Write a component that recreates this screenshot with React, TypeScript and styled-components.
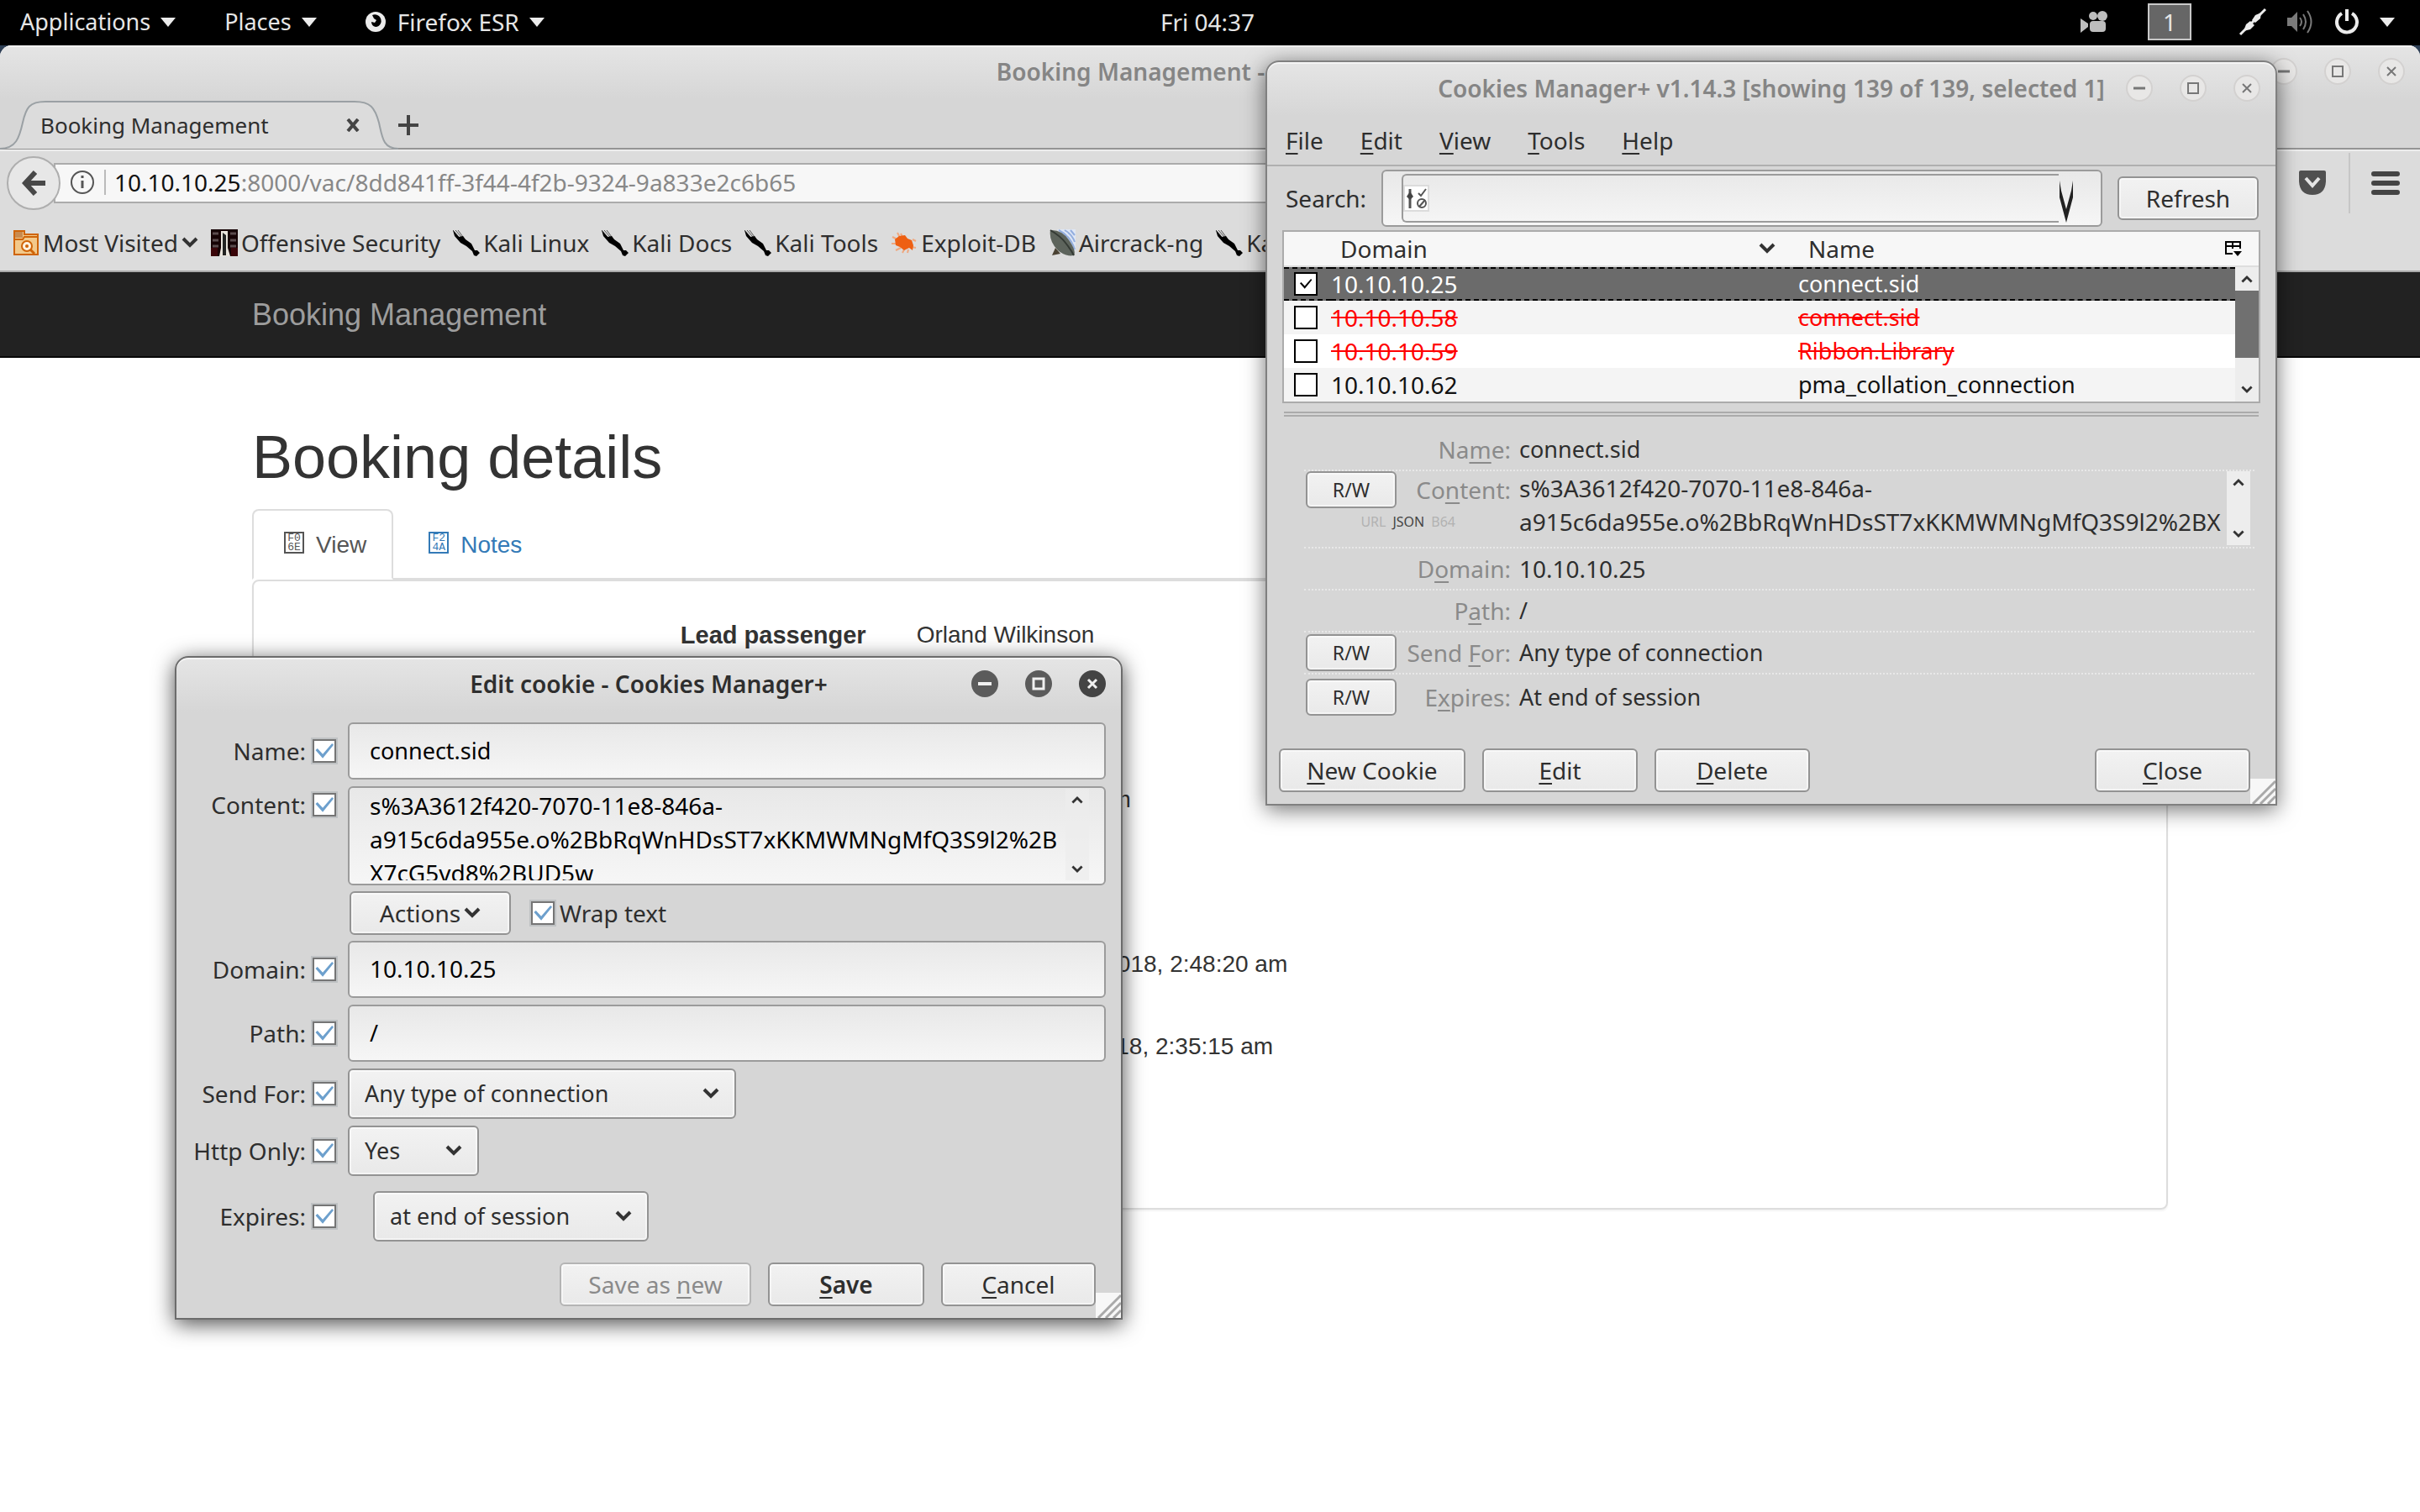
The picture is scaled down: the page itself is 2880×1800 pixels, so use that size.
import React from 'react';
import styled, { createGlobalStyle, css } from 'styled-components';

const UI_FONT = '"Noto Sans", "Open Sans", sans-serif';
const WEB_FONT = '"Liberation Sans", Arial, sans-serif';
const LINE = '#ababab';
const EDGE = '#939393';
const INK = '#2e2e2e';

const GlobalStyle = createGlobalStyle`
  *, *::before, *::after { box-sizing: border-box; }
  body {
    margin: 0;
    background: #2e3f55;
    color: ${INK};
    font: 28px/40px ${UI_FONT};
  }
  button, input, select, textarea {
    margin: 0;
    padding: 0;
    font: inherit;
    color: inherit;
    border: 0;
    border-radius: 0;
    background: none;
    outline: none;
  }
  svg { display: block; flex: none; }
`;

const Desktop = styled.div`
  position: relative;
  display: flex;
  flex-direction: column;
  min-height: 100vh;
  overflow: hidden;
`;

/* ---------- system bar ---------- */

const SystemBar = styled.header`
  display: grid;
  grid-template-columns: 1fr auto 1fr;
  align-items: center;
  height: 54px;
  padding: 0 30px 2px 24px;
  background: #000;
  color: #e6e6e6;
`;

const BarGroup = styled.div<{ $end?: boolean }>`
  display: flex;
  align-items: center;
  gap: ${(p) => (p.$end ? 24 : 58)}px;
  justify-content: ${(p) => (p.$end ? 'flex-end' : 'flex-start')};
`;

const BarMenu = styled.button`
  display: flex;
  align-items: center;
  gap: 12px;
  font-size: 27px;
  white-space: nowrap;
`;

const AppName = styled.span`
  margin-left: 2px;
  font-size: 28px;
`;

const Workspace = styled.button`
  width: 52px;
  height: 44px;
  margin: 0 32px 0 24px;
  border: 2px solid #c8c8c8;
  background: #666;
  line-height: 38px;
`;

const Triangle = () => (
  <svg width="18" height="11" viewBox="0 0 18 11">
    <path d="M0 0H18L9 11Z" fill="#ececec" />
  </svg>
);

/* ---------- shared window parts ---------- */

const TitleBar = styled.div`
  display: grid;
  grid-template-columns: 1fr auto 1fr;
  align-items: center;
  height: 62px;
  padding: 0 18px;
`;

const BrowserTitleBar = styled(TitleBar)`
  padding-left: 34px;
`;

const Title = styled.h2<{ $active?: boolean }>`
  grid-column: 2;
  margin: 0;
  font-size: 28px;
  font-weight: 600;
  white-space: nowrap;
  color: ${(p) => (p.$active ? INK : '#858585')};
`;

const TitleButtons = styled.div`
  display: flex;
  gap: 32px;
  justify-content: flex-end;
`;

const RoundButton = styled.button<{ $active?: boolean; $dark?: boolean }>`
  display: grid;
  place-items: center;
  width: 32px;
  height: 32px;
  border-radius: 50%;
  color: ${(p) => (p.$active ? '#f0f0f0' : '#777')};
  background: ${(p) => (p.$active ? (p.$dark ? '#444' : '#5b5b5b') : '#e8e7e6')};
  border: ${(p) => (p.$active ? '0' : '2px solid #d3d1d0')};
`;

function WindowButtons({ active }: { active?: boolean }) {
  const w = active ? 3 : 2;
  return (
    <TitleButtons>
      <RoundButton $active={active} aria-label="Minimize">
        <svg width="16" height="16" viewBox="0 0 16 16" stroke="currentColor" strokeWidth={w + 1} fill="none">
          <path d={active ? 'M0 8H16' : 'M1 8H15'} />
        </svg>
      </RoundButton>
      <RoundButton $active={active} aria-label="Maximize">
        <svg width="16" height="16" viewBox="0 0 16 16" stroke="currentColor" strokeWidth={w} fill="none">
          <rect x="2" y="2" width="12" height="12" />
        </svg>
      </RoundButton>
      <RoundButton $active={active} $dark aria-label="Close">
        <svg width="16" height="16" viewBox="0 0 16 16" stroke="currentColor" strokeWidth={w} fill="none">
          <path d="M3 3L13 13M13 3L3 13" />
        </svg>
      </RoundButton>
    </TitleButtons>
  );
}

const FloatingWindow = styled.section<{ $left: number; $top: number; $width: number; $active?: boolean }>`
  position: absolute;
  left: ${(p) => p.$left}px;
  top: ${(p) => p.$top}px;
  width: ${(p) => p.$width}px;
  border: 2px solid ${(p) => (p.$active ? '#6c6c6c' : '#808080')};
  border-radius: 16px 16px 0 0;
  background: linear-gradient(#e5e5e5, #d6d6d6 64px);
  box-shadow: inset 0 2px #f4f4f4, 0 5px 26px rgba(0, 0, 0, ${(p) => (p.$active ? 0.7 : 0.55)});
`;

const Grip = styled.svg`
  position: absolute;
  right: 0;
  bottom: 0;
`;

const ResizeGrip = () => (
  <Grip width="30" height="30" viewBox="0 0 30 30">
    <rect width="30" height="30" fill="#f7f7f7" />
    <path d="M3 30L30 3M12 30L30 12M21 30L30 21" stroke="#a9a9a9" strokeWidth="3" />
  </Grip>
);

const buttonFace = css`
  border: 2px solid ${EDGE};
  border-radius: 6px;
  background: linear-gradient(#f2f2f2, #e9e9e9);
  box-shadow: inset 0 0 0 2px rgba(255, 255, 255, 0.5);
`;

const PushButton = styled.button<{ $width: number; $strong?: boolean }>`
  ${buttonFace}
  display: flex;
  align-items: center;
  justify-content: center;
  gap: 4px;
  width: ${(p) => p.$width}px;
  height: 52px;
  font-weight: ${(p) => (p.$strong ? 600 : 400)};
  white-space: nowrap;

  &:disabled {
    color: #8a8a8a;
    border-color: #b4b4b4;
  }
`;

const Key = styled.u`
  text-decoration-thickness: 2px;
  text-underline-offset: 4px;
  text-decoration-skip-ink: none;
`;

/** Text with its keyboard mnemonic underlined: "_File" underlines the F. */
function Mnemonic({ text }: { text: string }) {
  const i = text.indexOf('_');
  if (i < 0) return <>{text}</>;
  return (
    <span>
      {text.slice(0, i)}
      <Key>{text[i + 1]}</Key>
      {text.slice(i + 2)}
    </span>
  );
}

const Chevron = ({ up, small }: { up?: boolean; small?: boolean }) => (
  <svg width={small ? 14 : 20} height={small ? 10 : 14} viewBox="0 0 20 14" fill="none" stroke="#333" strokeWidth="4">
    <path d={up ? 'M2 12L10 4L18 12' : 'M2 2L10 10L18 2'} />
  </svg>
);

const Track = styled.div<{ $fill?: string }>`
  display: flex;
  flex-direction: column;
  align-items: center;
  justify-content: space-between;
  width: 28px;
  height: 100%;
  padding: 8px 0;
  background: ${(p) => p.$fill || '#ededed'};
`;

/* ---------- browser ---------- */

const Browser = styled.main`
  flex: 1;
  display: flex;
  flex-direction: column;
  border-radius: 14px 14px 0 0;
  overflow: hidden;
  background: #fff;
`;

const Chrome = styled.div`
  background: linear-gradient(#e5e5e5, #d6d6d6 64px);
  box-shadow: inset 0 2px #f2f2f2;
`;

const TabStrip = styled.div`
  display: flex;
  align-items: center;
  height: 62px;
  border-bottom: 2px solid #949494;
`;

const Tab = styled.div`
  display: grid;
  width: 474px;
  height: 62px;
  margin-bottom: -2px;
  align-items: center;

  & > * { grid-area: 1 / 1; }
`;

const TabContent = styled.div`
  display: flex;
  align-items: center;
  justify-content: space-between;
  padding: 4px 46px 0 48px;
  font-size: 26px;
`;

const NewTab = styled.button`
  padding-top: 6px;
`;

const Toolbar = styled.div`
  display: flex;
  align-items: center;
  height: 82px;
  padding: 0 24px 4px 8px;
  background: #dcdcdc;
  border-top: 2px solid #ededed;
`;

const BackButton = styled.button`
  display: grid;
  place-items: center;
  z-index: 1;
  width: 64px;
  height: 64px;
  border: 2px solid #aeaeae;
  border-radius: 50%;
  background: #e7e7e7;
`;

const AddressBar = styled.label`
  flex: 1;
  display: flex;
  align-items: center;
  height: 48px;
  margin: 0 40px 0 -8px;
  padding: 0 0 2px 18px;
  border: 2px solid ${LINE};
  background: #f7f7f7;
  color: #888;
`;

const Address = styled.div`
  margin-left: 12px;
  padding-left: 10px;
  border-left: 2px solid #bbb;
  line-height: 30px;
`;

const Host = styled.span`
  color: #111;
`;

const ToolButton = styled.button`
  display: grid;
  place-items: center;
  width: 34px;
  height: 40px;
`;

const ToolDivider = styled.div`
  width: 2px;
  height: 72px;
  margin: 0 25px 0 26px;
  background: #c6c6c6;
`;

const Bookmarks = styled.nav`
  display: flex;
  align-items: center;
  gap: 15px;
  height: 64px;
  padding: 0 15px 4px;
  background: #dcdcdc;
  border-bottom: 2px solid ${LINE};
`;

const Bookmark = styled.a`
  display: flex;
  align-items: center;
  gap: 4px;
  color: inherit;
  text-decoration: none;
  white-space: nowrap;
`;

const KaliIcon = () => (
  <svg width="32" height="32" viewBox="0 0 32 32">
    <path d="M0 1L7 9M3 1L10 9M6 1L12 9" stroke="#555" strokeWidth="1" />
    <path d="M0 1L2 8L9 16L16 20L23 26L25 31L28 32L32 28L29 25L26 25L22 17L15 12L12 8L7 9Z" fill="#000" />
  </svg>
);

const FolderIcon = () => (
  <svg width="32" height="32" viewBox="0 0 32 32">
    <path d="M2 2H14V6H30V30H2Z" fill="#f3c98b" stroke="#cf6408" strokeWidth="2" />
    <path d="M3 3H12V10H3Z" fill="#c98a4e" />
    <path d="M3 12H12L14 9H29" fill="none" stroke="#cf6408" strokeWidth="2" />
    <circle cx="17" cy="20" r="6" fill="#fff3e0" stroke="#cf6408" strokeWidth="2" />
    <circle cx="17" cy="20" r="2" fill="#cf6408" />
    <path d="M21 24L26 29" stroke="#cf6408" strokeWidth="3" />
  </svg>
);

const OffensiveIcon = () => (
  <svg width="32" height="32" viewBox="0 0 32 32">
    <rect width="32" height="32" fill="#160305" />
    <path d="M2 5H9M2 13H9M2 20H9M23 5H30M23 13H30M23 20H30" stroke="#5b4c4e" strokeWidth="3" />
    <path d="M0 22H8V32H0ZM24 22H32V32H24Z" fill="#3a0509" />
    <path d="M12 2H20V22L23 32H10L12 22Z" fill="#e9e4dc" />
    <path d="M14 4L18 7V31H14Z" fill="#222" />
  </svg>
);

const ExploitIcon = () => (
  <svg width="32" height="32" viewBox="0 0 32 32">
    <path d="M2 9L10 13M1 17H8M6 25L12 22M14 28L16 24M12 5L14 9M20 28L21 24M26 12L30 14M25 21L30 22M8 4L11 10" stroke="#efa87f" strokeWidth="2" />
    <path d="M5 12L10 8L17 7L20 11L25 13L27 19L26 25L22 22L16 25L11 21L6 19Z" fill="#ee5f12" />
  </svg>
);

const AircrackIcon = () => (
  <svg width="32" height="32" viewBox="0 0 32 32">
    <path d="M10 0H32V26Z" fill="#dfe7f5" />
    <path d="M12 1Q26 8 31 24M19 1Q28 6 31 15M26 1L31 7" fill="none" stroke="#93aede" strokeWidth="2" />
    <path d="M2 1Q16 0 25 14Q33 26 30 31Q20 33 11 25Q0 14 2 1Z" fill="#5d645c" />
    <path d="M2 1Q14 8 20 16Q27 25 30 31" fill="none" stroke="#343a34" strokeWidth="2" />
    <path d="M4 31L8 22L14 29Z" fill="#4a4233" />
  </svg>
);

const BOOKMARKS: { label: string; icon: React.ReactNode; menu?: boolean }[] = [
  { label: 'Most Visited', icon: <FolderIcon />, menu: true },
  { label: 'Offensive Security', icon: <OffensiveIcon /> },
  { label: 'Kali Linux', icon: <KaliIcon /> },
  { label: 'Kali Docs', icon: <KaliIcon /> },
  { label: 'Kali Tools', icon: <KaliIcon /> },
  { label: 'Exploit-DB', icon: <ExploitIcon /> },
  { label: 'Aircrack-ng', icon: <AircrackIcon /> },
  { label: 'Kali', icon: <KaliIcon /> },
];

/* ---------- web page ---------- */

const Page = styled.div`
  flex: 1;
  background: #fff;
  color: #333;
  font: 28px/40px ${WEB_FONT};
`;

const Container = styled.div`
  max-width: 2340px;
  margin: 0 auto;
  padding: 0 30px;
`;

const NavBar = styled.div`
  background: #222;
  border-bottom: 2px solid #080808;
`;

const Brand = styled.a`
  display: block;
  padding: 31px 0 29px;
  font-size: 36px;
  color: #9d9d9d;
  text-decoration: none;
`;

const Heading = styled.h1`
  margin: 78px 0 22px;
  font-size: 72px;
  font-weight: 400;
  line-height: 80px;
`;

const PageTabs = styled.nav`
  display: flex;
  gap: 4px;
  height: 84px;
  border-bottom: 2px solid #ddd;
`;

const PageTab = styled.a<{ $current?: boolean }>`
  display: flex;
  align-items: center;
  gap: 14px;
  height: 84px;
  padding: 2px 30px 0 36px;
  border: 2px solid transparent;
  border-radius: 8px 8px 0 0;
  color: #337ab7;
  text-decoration: none;
  ${(p) =>
    p.$current &&
    css`
      color: #555;
      background: #fff;
      border-color: #ddd #ddd transparent;
    `}
`;

const MissingGlyph = styled.span`
  display: grid;
  width: 24px;
  height: 26px;
  margin-bottom: 6px;
  place-content: center;
  border: 2px solid currentColor;
  font: 13px/11px "Liberation Mono", monospace;
  text-align: center;
`;

const Panel = styled.div`
  display: grid;
  row-gap: 30px;
  padding: 30px 0 60px;
  border: 2px solid #ddd;
  border-radius: 8px;
  box-shadow: 0 2px 2px rgba(0, 0, 0, 0.05);
`;

const Field = styled.div`
  display: grid;
  grid-template-columns: 1fr 2fr;
  height: 68px;
  padding: 14px 0;
`;

const FieldName = styled.strong`
  padding-right: 30px;
  font-size: 29px;
  text-align: right;
`;

const FieldValue = styled.span`
  padding-left: 30px;
`;

const BOOKING: [string, string][] = [
  ['Lead passenger', 'Orland Wilkinson'],
  ['', ''],
  ['Route', 'Rome to Amsterdam'],
  ['', ''],
  ['Departure', 'Sunday, June 17, 2018, 2:48:20 am'],
  ['Booked', 'Friday, June 15, 2018, 2:35:15 am'],
  ['', ''],
];

/* ---------- cookies manager ---------- */

const MenuBar = styled.div`
  display: flex;
  align-items: center;
  gap: 44px;
  height: 62px;
  padding: 2px 22px 0;
  border-bottom: 2px solid #b0b0b0;
`;

const SearchRow = styled.div`
  display: flex;
  align-items: center;
  height: 76px;
  padding: 0 20px 0 22px;
`;

const SearchLabel = styled.label`
  width: 114px;
`;

const SearchFrame = styled.div`
  flex: 1;
  display: flex;
  height: 68px;
  margin-right: 18px;
  padding: 3px 0 3px 22px;
  border: 2px solid #9b9b9b;
  border-radius: 6px;
  background: linear-gradient(#e8e8e8, #f6f6f6);
`;

const SearchField = styled.div`
  flex: 1;
  display: flex;
  align-items: center;
  border: 2px solid #9b9b9b;
  border-right: 0;
  border-radius: 6px 0 0 6px;
`;

const SearchInput = styled.input`
  flex: 1;
  height: 40px;
  padding: 0 12px;
`;

const SearchDrop = styled.button`
  width: 50px;
  padding-top: 4px;
`;

const TableFrame = styled.div`
  margin: 0 18px 10px;
  border: 2px solid ${LINE};
`;

const CookieTable = styled.table`
  width: 100%;
  table-layout: fixed;
  border-collapse: separate;
  border-spacing: 0;
  background: #fff;
`;

const CheckCol = styled.col`
  width: 56px;
`;

const DomainCol = styled.col`
  width: 556px;
`;

const ScrollCol = styled.col`
  width: 28px;
`;

const HeadCell = styled.th<{ $indent: number; $end: number }>`
  height: 42px;
  padding: 0 ${(p) => p.$end}px 0 ${(p) => p.$indent}px;
  background: #f7f7f7;
  border-bottom: 2px solid #dedede;
  font-weight: 400;
  line-height: 38px;
`;

const HeadContent = styled.div`
  display: flex;
  align-items: center;
  justify-content: space-between;
`;

const Cell = styled.td`
  height: 40px;
  padding: 0;
  font-size: 27px;
  line-height: 32px;
  white-space: nowrap;
`;

const CookieRow = styled.tr<{ $selected?: boolean; $expired?: boolean; $odd?: boolean }>`
  color: ${(p) => (p.$selected ? '#fff' : p.$expired ? '#f00' : '#111')};
  background: ${(p) => (p.$selected ? '#6b6b6b' : p.$odd ? '#f4f4f4' : '#fff')};

  & > ${Cell} {
    text-decoration: ${(p) => (p.$expired ? 'line-through' : 'none')};
    ${(p) =>
      p.$selected &&
      css`
        border-top: 2px dashed #000;
        border-bottom: 2px dashed #000;
      `}
  }
`;

const ScrollCell = styled.td`
  height: 160px;
  padding: 0;
  background: #ededed;
`;

const ScrollParts = styled.div`
  display: flex;
  flex-direction: column;
  align-items: center;
  height: 160px;
  padding: 9px 0;
`;

const Thumb = styled.div`
  width: 28px;
  height: 80px;
  margin: 9px 0 auto;
  background: #707070;
`;

const Digits = styled.span`
  font-size: 28px;
`;

const tick = css`
  appearance: none;
  flex: none;
  display: grid;
  place-content: center;
  width: 28px;
  height: 28px;
  background: #fff;

  &:checked::before {
    content: '';
    clip-path: polygon(6% 46%, 16% 38%, 42% 66%, 88% 12%, 96% 20%, 42% 86%);
  }
`;

const RowTick = styled.input`
  ${tick}
  margin-left: 12px;
  border: 2px solid #000;

  &:checked::before {
    width: 16px;
    height: 16px;
    background: #000;
  }
`;

const FormTick = styled.input`
  ${tick}
  border: 2px solid #757575;
  box-shadow: 0 0 0 2px #bfc2c4;

  &:checked::before {
    width: 24px;
    height: 24px;
    background: #6da0cd;
  }
`;

const Splitter = styled.div`
  height: 6px;
  margin: 0 20px 15px;
  border-top: 2px solid ${LINE};
  border-bottom: 2px solid ${LINE};
`;

const Details = styled.div`
  margin: 0 25px 0 44px;
`;

const DetailRow = styled.div`
  display: grid;
  grid-template-columns: 108px 136px 1fr;
  grid-auto-rows: 48px;
  align-items: center;
  padding-left: 2px;

  & + & {
    border-top: 2px dotted #e8e8e8;
  }

  &:last-child {
    grid-auto-rows: 54px;
  }
`;

const ContentRow = styled(DetailRow)`
  grid-template-rows: 44px 46px;
`;

const DetailLabel = styled.label`
  grid-column: 2;
  text-align: right;
  color: #8a8a8a;
`;

const DetailValue = styled.output<{ $digits?: boolean }>`
  padding-left: 10px;
  font-size: ${(p) => (p.$digits ? 28 : 27)}px;
`;

const DetailContent = styled.div`
  grid-area: 1 / 3 / 3 / 4;
  display: flex;
  height: 88px;
  padding: 0 5px 0 10px;
  align-self: start;
`;

const DetailText = styled.textarea`
  flex: 1;
  height: 80px;
  resize: none;
  overflow: hidden;
  white-space: pre;
`;

const Encodings = styled.div`
  grid-area: 2 / 1 / 3 / 3;
  align-self: start;
  display: flex;
  gap: 8px;
  justify-content: flex-end;
  padding: 6px 66px 0 0;
  font-size: 16px;
  line-height: 20px;
  color: #b2b2b2;
`;

const Encoding = styled.button<{ $on?: boolean }>`
  color: ${(p) => (p.$on ? '#444' : 'inherit')};
`;

const AccessButton = styled.button`
  ${buttonFace}
  grid-column: 1;
  height: 44px;
  font-size: 23px;
  line-height: 36px;
`;

const Footer = styled.div<{ $end?: boolean }>`
  display: flex;
  gap: 20px;
  justify-content: ${(p) => (p.$end ? 'flex-end' : 'flex-start')};
  padding: ${(p) => (p.$end ? 25 : 34)}px 30px 14px 14px;
`;

const Spring = styled.div`
  flex: 1;
`;

const COOKIES: { domain: string; name: string; selected?: boolean; expired?: boolean }[] = [
  { domain: '10.10.10.25', name: 'connect.sid', selected: true },
  { domain: '10.10.10.58', name: 'connect.sid', expired: true },
  { domain: '10.10.10.59', name: 'Ribbon.Library', expired: true },
  { domain: '10.10.10.62', name: 'pma_collation_connection' },
];

function CookiesManager() {
  return (
    <FloatingWindow $left={1506} $top={72} $width={1204}>
      <TitleBar>
        <Title>Cookies Manager+ v1.14.3 [showing 139 of 139, selected 1]</Title>
        <WindowButtons />
      </TitleBar>
      <MenuBar>
        {['_File', '_Edit', '_View', '_Tools', '_Help'].map((m) => (
          <button key={m}>
            <Mnemonic text={m} />
          </button>
        ))}
      </MenuBar>
      <SearchRow>
        <SearchLabel htmlFor="search">Search:</SearchLabel>
        <SearchFrame>
          <SearchField>
            <svg width="32" height="32" viewBox="0 0 32 32" fill="none">
              <rect x="1" y="1" width="29" height="30" fill="#fff" stroke="#dcdcdc" strokeWidth="2" />
              <path d="M8 5V28" stroke="#555" strokeWidth="3" />
              <path d="M4 14L8 8L12 14L8 18Z" fill="#444" />
              <path d="M18 10L21 13L27 5" stroke="#555" strokeWidth="2" />
              <circle cx="22" cy="22" r="5" stroke="#555" strokeWidth="2" />
              <path d="M19 26L26 18" stroke="#555" strokeWidth="2" />
            </svg>
            <SearchInput id="search" type="text" />
          </SearchField>
          <SearchDrop aria-label="Search history">
            <svg width="18" height="54" viewBox="0 0 18 54">
              <path d="M1 4L3 16L9 38L15 16L17 4V24L9 54L1 24Z" fill="#222" />
            </svg>
          </SearchDrop>
        </SearchFrame>
        <PushButton $width={168}>Refresh</PushButton>
      </SearchRow>
      <TableFrame>
        <CookieTable>
          <colgroup>
            <CheckCol />
            <DomainCol />
            <col />
            <ScrollCol />
          </colgroup>
          <thead>
            <tr>
              <HeadCell colSpan={2} $indent={67} $end={27}>
                <HeadContent>
                  Domain <Chevron />
                </HeadContent>
              </HeadCell>
              <HeadCell colSpan={2} $indent={12} $end={20}>
                <HeadContent>
                  Name
                  <svg width="20" height="18" viewBox="0 0 20 18" fill="none" stroke="#000" strokeWidth="2">
                    <path d="M9 15H1V1H18V9M1 6H18M9 1V9" />
                    <path d="M10 12H20L15 18Z" fill="#000" stroke="none" />
                  </svg>
                </HeadContent>
              </HeadCell>
            </tr>
          </thead>
          <tbody>
            {COOKIES.map((c, i) => (
              <CookieRow key={c.domain} $selected={c.selected} $expired={c.expired} $odd={i % 2 === 1}>
                <Cell>
                  <RowTick type="checkbox" defaultChecked={c.selected} aria-label={'Select ' + c.domain} />
                </Cell>
                <Cell>
                  <Digits>{c.domain}</Digits>
                </Cell>
                <Cell>{c.name}</Cell>
                {i === 0 && (
                  <ScrollCell rowSpan={4}>
                    <ScrollParts>
                      <Chevron up small />
                      <Thumb />
                      <Chevron small />
                    </ScrollParts>
                  </ScrollCell>
                )}
              </CookieRow>
            ))}
          </tbody>
        </CookieTable>
      </TableFrame>
      <Splitter />
      <Details>
        <DetailRow>
          <DetailLabel htmlFor="d-name">
            <Mnemonic text="Na_me:" />
          </DetailLabel>
          <DetailValue id="d-name">connect.sid</DetailValue>
        </DetailRow>
        <ContentRow>
          <AccessButton>R/W</AccessButton>
          <DetailLabel htmlFor="d-content">
            <Mnemonic text="Co_ntent:" />
          </DetailLabel>
          <DetailContent>
            <DetailText
              id="d-content"
              readOnly
              value={'s%3A3612f420-7070-11e8-846a-\na915c6da955e.o%2BbRqWnHDsST7xKKMWMNgMfQ3S9l2%2BX'}
            />
            <Track>
              <Chevron up small />
              <Chevron small />
            </Track>
          </DetailContent>
          <Encodings>
            <Encoding>URL</Encoding>
            <Encoding $on>JSON</Encoding>
            <Encoding>B64</Encoding>
          </Encodings>
        </ContentRow>
        <DetailRow>
          <DetailLabel htmlFor="d-domain">
            <Mnemonic text="D_omain:" />
          </DetailLabel>
          <DetailValue id="d-domain" $digits>10.10.10.25</DetailValue>
        </DetailRow>
        <DetailRow>
          <DetailLabel htmlFor="d-path">
            <Mnemonic text="P_ath:" />
          </DetailLabel>
          <DetailValue id="d-path">/</DetailValue>
        </DetailRow>
        <DetailRow>
          <AccessButton>R/W</AccessButton>
          <DetailLabel htmlFor="d-send">
            <Mnemonic text="Send _For:" />
          </DetailLabel>
          <DetailValue id="d-send">Any type of connection</DetailValue>
        </DetailRow>
        <DetailRow>
          <AccessButton>R/W</AccessButton>
          <DetailLabel htmlFor="d-expires">
            <Mnemonic text="E_xpires:" />
          </DetailLabel>
          <DetailValue id="d-expires">At end of session</DetailValue>
        </DetailRow>
      </Details>
      <Footer>
        <PushButton $width={222}><Mnemonic text="_New Cookie" /></PushButton>
        <PushButton $width={185}><Mnemonic text="_Edit" /></PushButton>
        <PushButton $width={185}><Mnemonic text="_Delete" /></PushButton>
        <Spring />
        <PushButton $width={185}><Mnemonic text="_Close" /></PushButton>
      </Footer>
      <ResizeGrip />
    </FloatingWindow>
  );
}

/* ---------- edit cookie dialog ---------- */

const Form = styled.div`
  display: flex;
  flex-direction: column;
  gap: 8px;
  padding: 15px 18px 0 0;
`;

const FormRow = styled.div<{ $top?: boolean; $spaced?: boolean }>`
  display: flex;
  align-items: ${(p) => (p.$top ? 'flex-start' : 'center')};
  gap: 14px;
  margin-top: ${(p) => (p.$spaced ? 10 : 0)}px;
`;

const FormLabel = styled.label<{ $top?: boolean }>`
  display: flex;
  align-items: center;
  justify-content: flex-end;
  gap: 8px;
  width: 190px;
  padding-top: ${(p) => (p.$top ? 2 : 0)}px;
  white-space: nowrap;
`;

const entryFace = css`
  flex: 1;
  border: 2px solid #9b9b9b;
  border-radius: 6px;
  background: linear-gradient(#e8e8e8, #f6f6f6);
  color: #000;
`;

const Entry = styled.input<{ $digits?: boolean }>`
  ${entryFace}
  height: 68px;
  padding: 0 24px 2px;
  font-size: ${(p) => (p.$digits ? 28 : 27)}px;
`;

const ContentFrame = styled.div`
  ${entryFace}
  display: flex;
  height: 118px;
  padding: 1px 18px 4px 24px;
`;

const ContentText = styled.textarea`
  flex: 1;
  height: 109px;
  resize: none;
  overflow: hidden;
  white-space: pre;
`;

const ActionRow = styled.div`
  display: flex;
  align-items: center;
  height: 50px;
  padding-left: 206px;
`;

const WrapLabel = styled.label`
  display: flex;
  align-items: center;
  gap: 6px;
  margin-left: 24px;
`;

const SelectBox = styled.div<{ $width: number; $inset?: boolean }>`
  ${buttonFace}
  display: grid;
  align-items: center;
  width: ${(p) => p.$width}px;
  height: 60px;
  margin-left: ${(p) => (p.$inset ? 30 : 0)}px;

  & > * { grid-area: 1 / 1; }
  & > svg { justify-self: end; margin-right: 18px; pointer-events: none; }
`;

const Select = styled.select`
  appearance: none;
  width: 100%;
  height: 56px;
  padding-left: 18px;
  font-size: 27px;
`;

function CheckedLabel({ id, text, top }: { id: string; text: string; top?: boolean }) {
  return (
    <FormLabel htmlFor={id} $top={top}>
      {text}
      <FormTick type="checkbox" defaultChecked aria-label={'Include ' + text} />
    </FormLabel>
  );
}

function Choice({ id, value, width, inset }: { id: string; value: string; width: number; inset?: boolean }) {
  return (
    <SelectBox $width={width} $inset={inset}>
      <Select id={id}>
        <option>{value}</option>
      </Select>
      <Chevron />
    </SelectBox>
  );
}

function EditCookie() {
  return (
    <FloatingWindow $left={208} $top={781} $width={1128} $active>
      <TitleBar>
        <Title $active>Edit cookie - Cookies Manager+</Title>
        <WindowButtons active />
      </TitleBar>
      <Form>
        <FormRow>
          <CheckedLabel id="f-name" text="Name:" />
          <Entry id="f-name" type="text" defaultValue="connect.sid" />
        </FormRow>
        <FormRow $top>
          <CheckedLabel id="f-content" text="Content:" top />
          <ContentFrame>
            <ContentText
              id="f-content"
              defaultValue={'s%3A3612f420-7070-11e8-846a-\na915c6da955e.o%2BbRqWnHDsST7xKKMWMNgMfQ3S9l2%2B\nX7cG5vd8%2BUD5w'}
            />
            <Track $fill="rgba(237, 237, 237, 0.7)">
              <Chevron up small />
              <Chevron small />
            </Track>
          </ContentFrame>
        </FormRow>
        <ActionRow>
          <PushButton $width={192}>
            Actions <Chevron />
          </PushButton>
          <WrapLabel>
            <FormTick type="checkbox" defaultChecked />
            Wrap text
          </WrapLabel>
        </ActionRow>
        <FormRow>
          <CheckedLabel id="f-domain" text="Domain:" />
          <Entry id="f-domain" type="text" defaultValue="10.10.10.25" $digits />
        </FormRow>
        <FormRow>
          <CheckedLabel id="f-path" text="Path:" />
          <Entry id="f-path" type="text" defaultValue="/" />
        </FormRow>
        <FormRow>
          <CheckedLabel id="f-send" text="Send For:" />
          <Choice id="f-send" value="Any type of connection" width={462} />
        </FormRow>
        <FormRow>
          <CheckedLabel id="f-http" text="Http Only:" />
          <Choice id="f-http" value="Yes" width={156} />
        </FormRow>
        <FormRow $spaced>
          <CheckedLabel id="f-expires" text="Expires:" />
          <Choice id="f-expires" value="at end of session" width={328} inset />
        </FormRow>
      </Form>
      <Footer $end>
        <PushButton $width={228} disabled><Mnemonic text="Save as _new" /></PushButton>
        <PushButton $width={186} $strong><Mnemonic text="_Save" /></PushButton>
        <PushButton $width={184}><Mnemonic text="_Cancel" /></PushButton>
      </Footer>
      <ResizeGrip />
    </FloatingWindow>
  );
}

export default function App() {
  return (
    <Desktop>
      <GlobalStyle />
      <SystemBar>
        <BarGroup>
          <BarMenu>Applications <Triangle /></BarMenu>
          <BarMenu>Places <Triangle /></BarMenu>
          <BarMenu>
            <svg width="24" height="24" viewBox="0 0 24 24">
              <circle cx="12" cy="12" r="12" fill="#ececec" />
              <path d="M8 4Q12 2 16 5Q20 9 18 14Q16 18 12 18Q7 17 7 12L11 13L13 10L10 8Z" fill="#000" />
            </svg>
            <AppName>Firefox ESR</AppName>
            <Triangle />
          </BarMenu>
        </BarGroup>
        <span>Fri 04:37</span>
        <BarGroup $end>
          <svg width="32" height="26" viewBox="0 0 32 26" fill="#bdbdbd">
            <circle cx="15" cy="6" r="5" />
            <circle cx="26" cy="6" r="6" />
            <rect x="11" y="12" width="19" height="13" rx="4" />
            <path d="M0 9L9 15V19L0 26Z" />
          </svg>
          <Workspace>1</Workspace>
          <svg width="34" height="34" viewBox="0 0 34 34">
            <path d="M2 32L32 2" stroke="#ececec" strokeWidth="3" />
            <path d="M6 28L9 20L14 16L19 21L14 26ZM16 15L20 9L27 6L26 13L20 18Z" fill="#ececec" />
          </svg>
          <svg width="32" height="32" viewBox="0 0 32 32" fill="none" stroke="#7a7a7a" strokeWidth="2">
            <path d="M0 11H5L12 4V28L5 21H0Z" fill="#7a7a7a" stroke="none" />
            <path d="M15 11Q19 16 15 21M19 7Q25 16 19 25M24 3Q33 16 24 29" />
          </svg>
          <svg width="30" height="32" viewBox="0 0 30 32" fill="none" stroke="#ececec" strokeWidth="4">
            <path d="M9 6A12 12 0 1 0 21 6M15 1V15" />
          </svg>
          <Triangle />
        </BarGroup>
      </SystemBar>

      <Browser>
        <Chrome>
          <BrowserTitleBar>
            <Title>Booking Management - Mozilla Firefox</Title>
            <WindowButtons />
          </BrowserTitleBar>
          <TabStrip>
            <Tab>
              <svg width="474" height="62" viewBox="0 0 474 62">
                <path
                  d="M0 61C19 61 23 48 27 30C31 12 35 5 54 5H422C441 5 446 12 451 30C455 48 456 61 474 61"
                  fill="#dcdcdc"
                  stroke="#9aa0a4"
                  strokeWidth="2"
                />
              </svg>
              <TabContent>
                Booking Management
                <svg width="16" height="16" viewBox="0 0 16 16" stroke="#444" strokeWidth="4">
                  <path d="M2 1L14 15M14 1L2 15" />
                </svg>
              </TabContent>
            </Tab>
            <NewTab aria-label="New tab">
              <svg width="24" height="24" viewBox="0 0 24 24" stroke="#444" strokeWidth="4">
                <path d="M12 0V24M0 12H24" />
              </svg>
            </NewTab>
          </TabStrip>
          <Toolbar>
            <BackButton aria-label="Back">
              <svg width="28" height="30" viewBox="0 0 28 30" fill="none" stroke="#484848" strokeWidth="6">
                <path d="M16 2L4 15L16 28M5 15H28" />
              </svg>
            </BackButton>
            <AddressBar>
              <svg width="28" height="28" viewBox="0 0 28 28" fill="none" stroke="#555" strokeWidth="2">
                <circle cx="14" cy="14" r="13" />
                <path d="M14 12V21M14 6V9" strokeWidth="3" />
              </svg>
              <Address>
                <Host>10.10.10.25</Host>:8000/vac/8dd841ff-3f44-4f2b-9324-9a833e2c6b65
              </Address>
            </AddressBar>
            <ToolButton aria-label="Pocket">
              <svg width="32" height="30" viewBox="0 0 32 30">
                <path d="M2 0H30Q32 0 32 2V13Q31 29 16 29Q1 29 0 13V2Q0 0 2 0Z" fill="#505050" />
                <path d="M8 9L16 18L24 9" fill="none" stroke="#e4e4e4" strokeWidth="4" />
              </svg>
            </ToolButton>
            <ToolDivider />
            <ToolButton aria-label="Menu">
              <svg width="34" height="28" viewBox="0 0 34 28" stroke="#444" strokeWidth="6" strokeLinecap="round">
                <path d="M3 3H31M3 14H31M3 25H31" />
              </svg>
            </ToolButton>
          </Toolbar>
          <Bookmarks>
            {BOOKMARKS.map((b) => (
              <Bookmark key={b.label} href="#">
                {b.icon}
                {b.label}
                {b.menu && <Chevron />}
              </Bookmark>
            ))}
          </Bookmarks>
        </Chrome>
        <Page>
          <NavBar>
            <Container>
              <Brand href="#">Booking Management</Brand>
            </Container>
          </NavBar>
          <Container>
            <Heading>Booking details</Heading>
            <PageTabs>
              <PageTab href="#" $current>
                <MissingGlyph aria-hidden>F0<br />6E</MissingGlyph>
                View
              </PageTab>
              <PageTab href="#">
                <MissingGlyph aria-hidden>F2<br />4A</MissingGlyph>
                Notes
              </PageTab>
            </PageTabs>
            <Panel>
              {BOOKING.map(([name, value], i) => (
                <Field key={i}>
                  <FieldName>{name}</FieldName>
                  <FieldValue>{value}</FieldValue>
                </Field>
              ))}
            </Panel>
          </Container>
        </Page>
      </Browser>

      <CookiesManager />
      <EditCookie />
    </Desktop>
  );
}
